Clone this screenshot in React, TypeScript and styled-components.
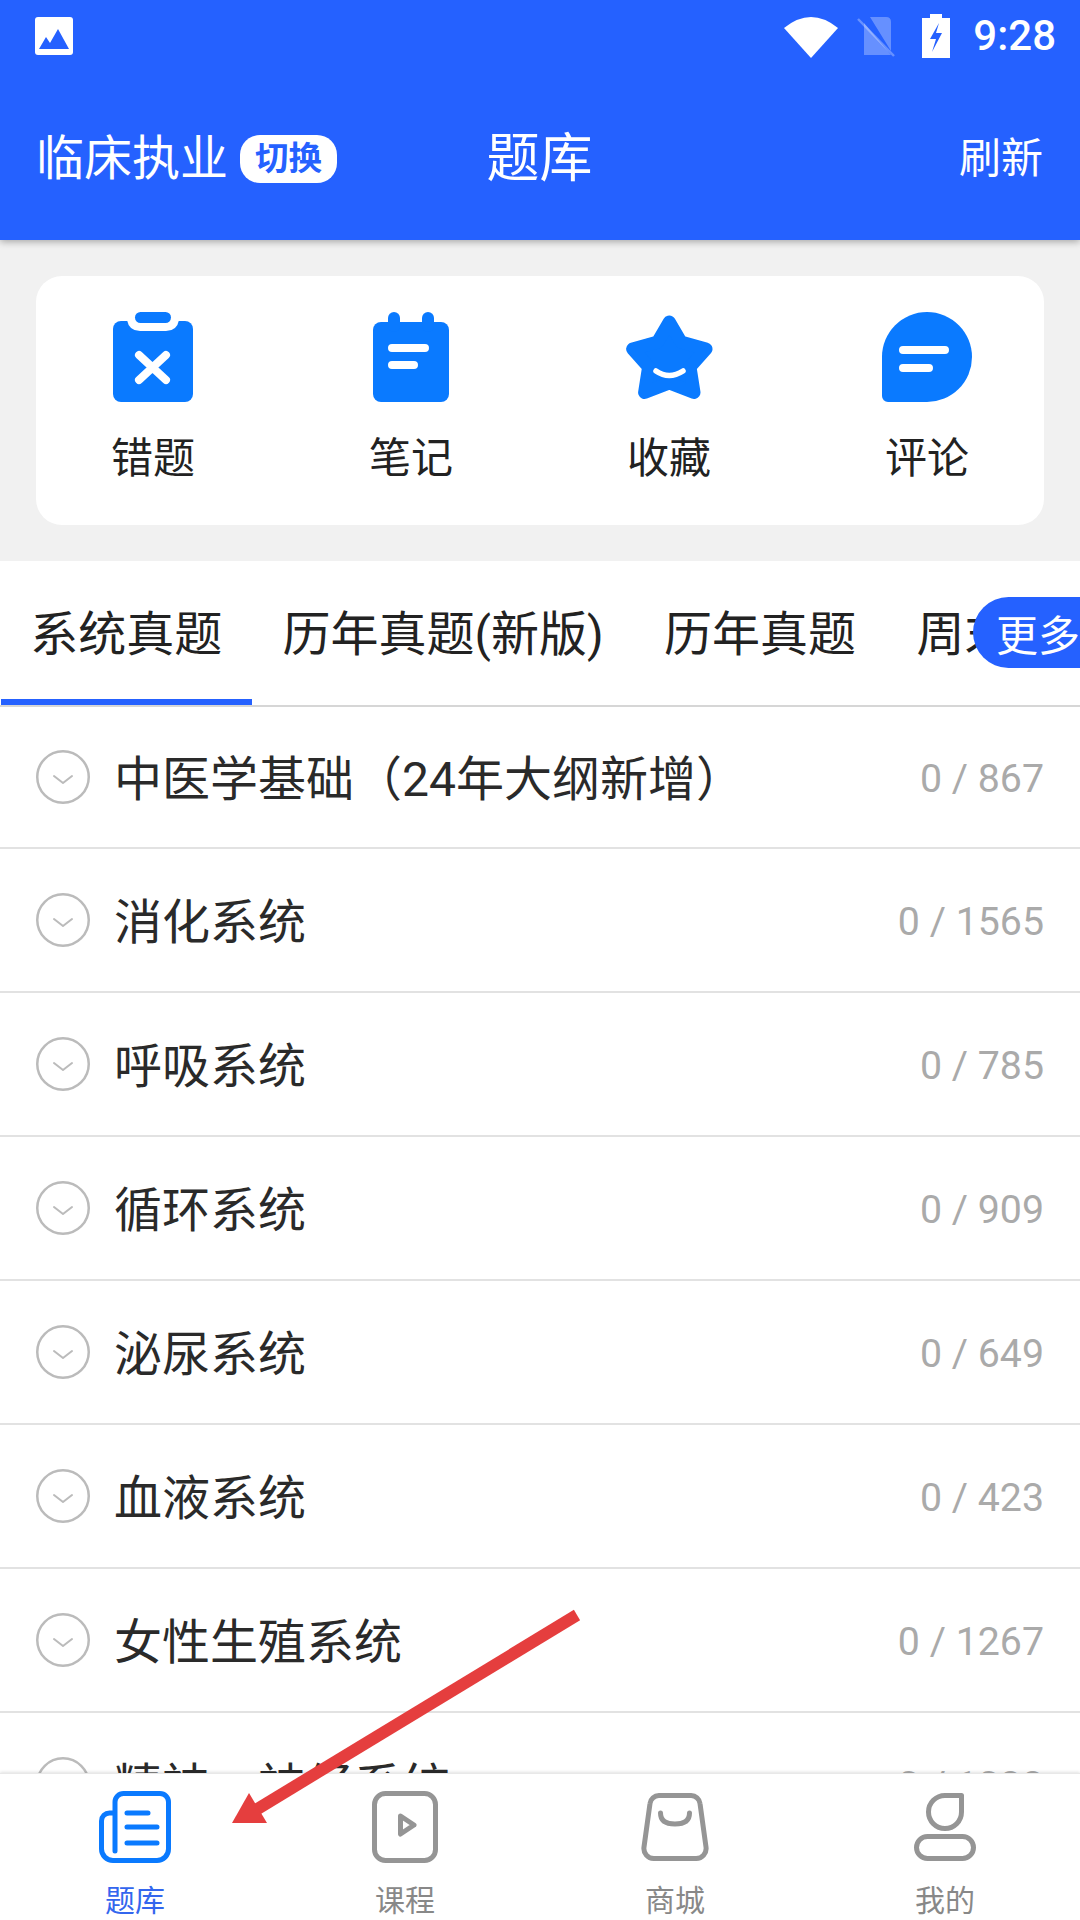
import styled, { createGlobalStyle } from "styled-components";

const BLUE = "#2561ff";
const ICON_BLUE = "#0a7aff";
const FONT = `Roboto, "Noto Sans CJK SC", sans-serif`;

const GlobalStyle = createGlobalStyle`
  html, body {
    margin: 0;
    padding: 0;
    background: #fff;
    font-family: ${FONT};
  }
  * {
    box-sizing: border-box;
  }
`;

const Screen = styled.div`
  position: relative;
  width: 1080px;
  height: 1920px;
  overflow: hidden;
  display: flex;
  flex-direction: column;
  background: #fff;
`;

const Header = styled.header`
  height: 240px;
  flex: none;
  background: ${BLUE};
  color: #fff;
  box-shadow: 0 2px 7px rgba(0, 0, 0, 0.3);
  position: relative;
  z-index: 2;
`;

const StatusBar = styled.div`
  height: 72px;
  display: flex;
  align-items: center;
  padding: 0 24px 0 35px;
`;

const StatusRight = styled.div`
  margin-left: auto;
  display: flex;
  align-items: center;
`;

const StatusIcon = styled.svg<{ $gap?: number }>`
  margin-left: ${(p) => p.$gap ?? 0}px;
`;

const Clock = styled.span`
  margin-left: 23px;
  font-size: 42px;
  font-weight: 500;
  line-height: 72px;
  font-family: Roboto, sans-serif;
`;

const TitleRow = styled.div`
  height: 168px;
  display: grid;
  grid-template-columns: 1fr auto 1fr;
  align-items: center;
  padding: 5px 37px 0 36px;
`;

const Exam = styled.div`
  display: flex;
  align-items: center;
  gap: 12px;
  font-size: 48px;
  line-height: 60px;
`;

const SwitchPill = styled.span`
  width: 97px;
  height: 48px;
  border-radius: 20px;
  background: #fff;
  color: ${BLUE};
  font-size: 33.5px;
  font-weight: 700;
  display: flex;
  align-items: center;
  justify-content: center;
`;

const PageTitle = styled.div`
  font-size: 53px;
  line-height: 60px;
`;

const Refresh = styled.div`
  justify-self: end;
  font-size: 42px;
  line-height: 60px;
`;

const Shortcuts = styled.section`
  height: 321px;
  flex: none;
  background: #f1f1f1;
  padding: 36px 36px;
`;

const ShortcutCard = styled.div`
  height: 249px;
  border-radius: 26px;
  background: #fff;
  display: flex;
  justify-content: space-between;
  padding: 36px 75px 0 75px;
`;

const Shortcut = styled.div`
  width: 84px;
  display: flex;
  flex-direction: column;
  align-items: center;
`;

const ShortcutIcon = styled.div`
  height: 90px;
  display: flex;
  align-items: flex-end;
  justify-content: center;
`;

const ShortcutLabel = styled.span`
  margin-top: 29px;
  font-size: 42px;
  line-height: 56px;
  color: #222;
  white-space: nowrap;
`;

const Tabs = styled.nav`
  position: relative;
  height: 146px;
  flex: none;
  display: flex;
  overflow: hidden;
  padding-left: 1px;
  border-bottom: 2px solid #d6d6d6;
`;

const Tab = styled.div<{ $active?: boolean }>`
  flex: none;
  height: 144px;
  padding: 0 30.2px;
  display: flex;
  align-items: center;
  font-size: 48px;
  color: #222;
  white-space: nowrap;
  border-bottom: 6px solid ${(p) => (p.$active ? BLUE : "transparent")};

  &:first-child {
    padding-left: 29.2px;
  }
`;

const MoreButton = styled.div`
  position: absolute;
  right: 0;
  top: 36px;
  width: 107px;
  height: 71px;
  padding-left: 23px;
  border-radius: 36px 0 0 36px;
  background: ${BLUE};
  color: #fff;
  font-size: 42px;
  line-height: 79px;
  white-space: nowrap;
  overflow: hidden;
`;

const List = styled.main`
  flex: 1;
  overflow: hidden;
`;

const Row = styled.div`
  height: 144px;
  display: flex;
  align-items: center;
  padding: 0 36px;
  border-bottom: 2px solid #e2e2e2;

  &:first-child {
    height: 142px;
  }
`;

const RowName = styled.span`
  margin-left: 24px;
  padding-bottom: 4px;
  font-size: 48px;
  color: #2a2a2a;
  white-space: nowrap;
`;

const RowCount = styled.span`
  margin-left: auto;
  padding-top: 3px;
  font-size: 39.3px;
  color: #aaa;
  font-family: Roboto, sans-serif;
  white-space: nowrap;
`;

const BottomNav = styled.footer`
  position: relative;
  z-index: 2;
  height: 147px;
  flex: none;
  display: grid;
  grid-template-columns: repeat(4, 1fr);
  background: #fff;
  border-top: 1px solid #e8e8e8;
  box-shadow: 0 -1px 3px rgba(0, 0, 0, 0.12);
`;

const NavItem = styled.div<{ $active?: boolean }>`
  display: flex;
  flex-direction: column;
  align-items: center;
  padding-top: 17px;
  color: ${(p) => (p.$active ? "#3366ee" : "#888")};
  font-size: 30px;
  line-height: 40px;
`;

const NavIcon = styled.div`
  height: 72px;
  margin-bottom: 18px;
  display: flex;
  align-items: center;
`;

const Arrow = styled.svg`
  position: absolute;
  left: 220px;
  top: 1600px;
  z-index: 3;
`;

const ClipboardIcon = () => (
  <svg width="80" height="90" viewBox="0 0 80 90">
    <rect y="9" width="80" height="81" rx="8" fill={ICON_BLUE} />
    <path d="M14 8 Q16 19 27 19 H53 Q64 19 66 8 Z" fill="#fff" />
    <rect x="22" width="36" height="11" rx="5.5" fill={ICON_BLUE} />
    <path d="M26 43 L53 68 M53 43 L26 68" stroke="#fff" strokeWidth="8" strokeLinecap="round" />
  </svg>
);

const NotepadIcon = () => (
  <svg width="76" height="90" viewBox="0 0 76 90">
    <rect y="10" width="76" height="80" rx="8" fill={ICON_BLUE} />
    <rect x="15" width="12" height="20" rx="6" fill={ICON_BLUE} />
    <rect x="49" width="12" height="20" rx="6" fill={ICON_BLUE} />
    <path d="M19 36 H52 M19 53 H41" stroke="#fff" strokeWidth="8" strokeLinecap="round" />
  </svg>
);

const StarIcon = () => (
  <svg width="87" height="90" viewBox="0 0 87 90">
    <g transform="translate(0 3)">
      <polygon
        points="43.3,7 55,27 80,34 64,52 68,77.5 43.3,68 18.6,77.5 22.6,52 6.6,34 31.6,27"
        fill={ICON_BLUE}
        stroke={ICON_BLUE}
        strokeWidth="13"
        strokeLinejoin="round"
      />
      <path d="M30 56 Q43 65 57 56" fill="none" stroke="#fff" strokeWidth="5.5" strokeLinecap="round" />
    </g>
  </svg>
);

const BubbleIcon = () => (
  <svg width="90" height="90" viewBox="0 0 90 90">
    <path d="M0 45 A45 45 0 1 1 45 90 H6 A6 6 0 0 1 0 84 Z" fill={ICON_BLUE} />
    <path d="M21 38 H63 M21 56 H47" stroke="#fff" strokeWidth="8" strokeLinecap="round" />
  </svg>
);

const BookIcon = () => (
  <svg width="72" height="72" viewBox="0 0 72 72" fill="none" stroke={ICON_BLUE} strokeWidth="5" strokeLinecap="round">
    <path d="M16 60 V11 a8.5 8.5 0 0 1 8.5-8.5 H61 a8.5 8.5 0 0 1 8.5 8.5 V58 a11.5 11.5 0 0 1-11.5 11.5 H14 a11.5 11.5 0 0 1-11.5-11.5 V30 a8 8 0 0 1 8-8 H16" />
    <path d="M28 22 H49 M28 36 H58 M28 52 H58" />
  </svg>
);

const PlayIcon = () => (
  <svg width="66" height="72" viewBox="0 0 66 72" fill="none" stroke="#959595" strokeWidth="5" strokeLinejoin="round">
    <rect x="2.5" y="2.5" width="61" height="67" rx="11" />
    <path d="M28.5 25 L42 34 L28.5 43 Z" />
  </svg>
);

const BagIcon = () => (
  <svg width="68" height="68" viewBox="0 0 68 68" fill="none" stroke="#959595" strokeWidth="5" strokeLinecap="round">
    <path d="M18 2.5 H50 a9 9 0 0 1 9 8 L65 54 a10 10 0 0 1-10 11.5 H13 a10 10 0 0 1-10-11.5 L9 10.5 a9 9 0 0 1 9-8 Z" />
    <path d="M19.5 20 Q19.5 31 34 31 Q48.5 31 48.5 20" />
  </svg>
);

const UserIcon = () => (
  <svg width="62" height="68" viewBox="0 0 62 68" fill="none" stroke="#959595" strokeWidth="5">
    <path d="M31 2.5 H47.5 V19 A16.5 16.5 0 1 1 31 2.5 Z" strokeLinejoin="round" />
    <rect x="2.5" y="43.5" width="57" height="22" rx="11" />
  </svg>
);

const Chevron = () => (
  <svg width="54" height="54" viewBox="0 0 54 54" fill="none" stroke="#bbb" strokeWidth="2.5">
    <circle cx="27" cy="27" r="25.75" />
    <path d="M18 26 L27 33 L36 26" strokeWidth="2" strokeLinecap="round" strokeLinejoin="round" />
  </svg>
);

const rows = [
  { name: "中医学基础（24年大纲新增）", count: "0 / 867" },
  { name: "消化系统", count: "0 / 1565" },
  { name: "呼吸系统", count: "0 / 785" },
  { name: "循环系统", count: "0 / 909" },
  { name: "泌尿系统", count: "0 / 649" },
  { name: "血液系统", count: "0 / 423" },
  { name: "女性生殖系统", count: "0 / 1267" },
  { name: "精神、神经系统", count: "0 / 1033" },
];

const shortcuts = [
  { label: "错题", icon: <ClipboardIcon /> },
  { label: "笔记", icon: <NotepadIcon /> },
  { label: "收藏", icon: <StarIcon /> },
  { label: "评论", icon: <BubbleIcon /> },
];

const tabs = ["系统真题", "历年真题(新版)", "历年真题", "周末真题"];

const navItems = [
  { label: "题库", icon: <BookIcon />, active: true },
  { label: "课程", icon: <PlayIcon /> },
  { label: "商城", icon: <BagIcon /> },
  { label: "我的", icon: <UserIcon /> },
];

export default function App() {
  return (
    <Screen>
      <GlobalStyle />
      <Header>
        <StatusBar>
          <svg width="38" height="38" viewBox="0 0 38 38">
            <rect width="38" height="38" rx="3" fill="#fff" />
            <path d="M4 32 L11 20 L15 26 L23 12 L34 32 Z" fill={BLUE} />
          </svg>
          <StatusRight>
            <StatusIcon width="54" height="44" viewBox="0 0 54 44">
              <path d="M0 14 Q27 -8 54 14 L27 44 Z" fill="#fff" />
            </StatusIcon>
            <StatusIcon $gap={18} width="40" height="42" viewBox="0 0 40 42">
              <path d="M14 2 H30 Q35 2 35 7 V36 Z M8 8 L35 40 H8 Z" fill="#fff" opacity="0.3" />
              <path d="M2 4 L38 41" stroke="#fff" strokeWidth="2.5" opacity="0.3" />
            </StatusIcon>
            <StatusIcon $gap={26} width="28" height="44" viewBox="0 0 28 44">
              <path d="M8 0 H20 V4 H28 V44 H0 V4 H8 Z" fill="#fff" />
              <path d="M17 9 L8 25 H14 L10 38 L20 19 H14 Z" fill={BLUE} />
            </StatusIcon>
            <Clock>9:28</Clock>
          </StatusRight>
        </StatusBar>
        <TitleRow>
          <Exam>
            临床执业
            <SwitchPill>切换</SwitchPill>
          </Exam>
          <PageTitle>题库</PageTitle>
          <Refresh>刷新</Refresh>
        </TitleRow>
      </Header>

      <Shortcuts>
        <ShortcutCard>
          {shortcuts.map((s) => (
            <Shortcut key={s.label}>
              <ShortcutIcon>{s.icon}</ShortcutIcon>
              <ShortcutLabel>{s.label}</ShortcutLabel>
            </Shortcut>
          ))}
        </ShortcutCard>
      </Shortcuts>

      <Tabs>
        {tabs.map((t, i) => (
          <Tab key={t + i} $active={i === 0}>
            {t}
          </Tab>
        ))}
        <MoreButton>更多</MoreButton>
      </Tabs>

      <List>
        {rows.map((r) => (
          <Row key={r.name}>
            <Chevron />
            <RowName>{r.name}</RowName>
            <RowCount>{r.count}</RowCount>
          </Row>
        ))}
      </List>

      <BottomNav>
        {navItems.map((n) => (
          <NavItem key={n.label} $active={n.active}>
            <NavIcon>{n.icon}</NavIcon>
            {n.label}
          </NavItem>
        ))}
      </BottomNav>

      <Arrow width="370" height="240" viewBox="220 1600 370 240">
        <path d="M577 1615 L254 1811" stroke="#e53e3e" strokeWidth="12" fill="none" />
        <polygon points="232,1823 267,1823 249,1793" fill="#e53e3e" />
      </Arrow>
    </Screen>
  );
}
